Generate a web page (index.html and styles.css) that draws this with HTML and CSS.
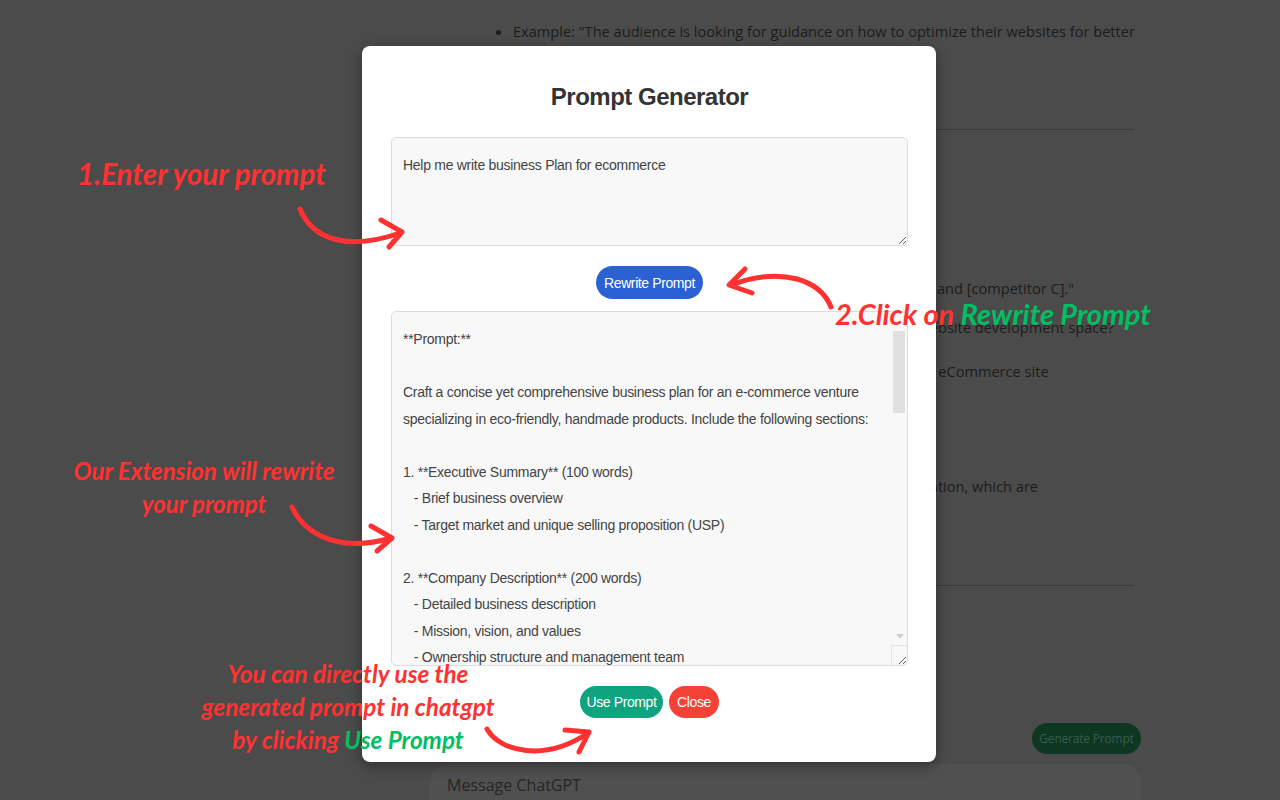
FILE: index.html
```html
<!DOCTYPE html>
<html>
<head>
<meta charset="utf-8">
<title>Prompt Generator</title>
<link rel="stylesheet" href="styles.css">
</head>
<body>
<div class="page">
  <main class="chat">
    <ul class="bul first">
      <li>Example: "The audience is looking for guidance on how to optimize their websites for better</li>
    </ul>
    <div class="ln indent">search engine rankings and conversions."</div>
    <hr class="rule r1">
    <ul class="bul lineA">
      <li>Example: "Competitors include [competitor A], [competitor B], and [competitor C]."</li>
    </ul>
    <div class="ln lineB">What sets your business apart from all your competitors in the website development space?</div>
    <ul class="bul lineC">
      <li>Example: "We create a speedy, reliable, and fully customizable eCommerce site</li>
    </ul>
    <div class="ln lineD">Describe the problems your audience faces in their everyday situation, which are</div>
    <hr class="rule r2">
  </main>
  <div class="composer">
    <div class="gen-row"><button class="gen-btn">Generate Prompt</button></div>
    <div class="msg-input">Message ChatGPT</div>
  </div>
</div>

<section class="modal">
  <h2 class="modal-title">Prompt Generator</h2>
  <textarea class="field field-in">Help me write business Plan for ecommerce</textarea>
  <div class="btn-row">
    <button class="pill pill-blue">Rewrite Prompt</button>
  </div>
  <div class="out-wrap">
    <textarea class="field field-out" readonly>**Prompt:**

Craft a concise yet comprehensive business plan for an e-commerce venture specializing in eco-friendly, handmade products. Include the following sections:

1. **Executive Summary** (100 words)
   - Brief business overview
   - Target market and unique selling proposition (USP)

2. **Company Description** (200 words)
   - Detailed business description
   - Mission, vision, and values
   - Ownership structure and management team

3. **Market Analysis** (300 words)
   - Industry overview and trends
   - Target market demographics and psychographics
   - Competitor analysis

4. **Products and Services** (200 words)
   - Product line and sourcing
   - Pricing strategy

5. **Marketing and Sales Strategy** (300 words)
   - Online marketing channels
   - Customer acquisition and retention

6. **Operations Plan** (200 words)
   - Fulfillment and logistics
   - Suppliers and artisans

7. **Financial Projections** (300 words)
   - Startup costs and funding needs
   - Revenue forecast for three years

Use clear headings and a professional tone.</textarea>
    <div class="sb-thumb"></div>
    <div class="sb-down"></div>
    <div class="sb-corner"></div>
  </div>
  <div class="btn-row bottom">
    <button class="pill pill-green">Use Prompt</button>
    <button class="pill pill-red">Close</button>
  </div>
</section>

<div class="note note1">1.Enter your prompt</div>
<div class="note note2">2.Click on <span class="g">Rewrite Prompt</span></div>
<div class="note note3">Our Extension will rewrite<br>your prompt</div>
<div class="note note4">You can directly use the<br>generated prompt in chatgpt<br>by clicking <span class="g">Use Prompt</span></div>

<svg class="arrows" width="1280" height="800" viewBox="0 0 1280 800">
  <g fill="none" stroke="#ff3131" stroke-width="5" stroke-linecap="round" stroke-linejoin="round">
    <path d="M300 209 C 312 238, 345 252, 400 233"/>
    <path d="M381 220 L402 232 L389 247"/>
    <path d="M831 307 C 820 280, 782 266, 731 285"/>
    <path d="M745 269 L729 285 L752 293"/>
    <path d="M292 507 C 305 535, 340 553, 391 538"/>
    <path d="M371 526 L392 538 L377 551"/>
    <path d="M487 729 C 500 752, 545 762, 588 733"/>
    <path d="M565 730 L589 732 L579 752"/>
  </g>
</svg>
</body>
</html>
```

FILE: styles.css
```css
* { box-sizing: border-box; }

html, body {
  margin: 0;
  padding: 0;
}

body {
  width: 1280px;
  height: 800px;
  overflow: hidden;
  background: #4b4b4b;
  position: relative;
  font-family: "Open Sans", "Noto Sans", sans-serif;
}

.page {
  display: flex;
  flex-direction: column;
  height: 800px;
}

.chat {
  flex: 0 0 723px;
  height: 723px;
  padding: 19px 0 0 490px;
  color: #1c1c1c;
  font-size: 14.6px;
  line-height: 24px;
  white-space: nowrap;
  overflow: hidden;
}

.bul {
  margin: 0;
  padding-left: 23px;
}

.ln { line-height: 24px; }
.indent { padding-left: 23px; }

.rule {
  border: 0;
  border-top: 1px solid #3a3a3a;
  width: 644px;
  margin: 0;
}
.r1 { margin-top: 62px; }
.lineA { margin-top: 146px; }
.lineB { margin-top: 15px; }
.lineC { margin-top: 20px; }
.lineD { margin-top: 91px; }
.r2 { margin-top: 87px; }

.composer {
  flex: 0 0 auto;
  margin-left: 430px;
  width: 711px;
  display: flex;
  flex-direction: column;
  gap: 10px;
}

.gen-row {
  display: flex;
  justify-content: flex-end;
}

.gen-btn {
  height: 31px;
  width: 109px;
  border: 0;
  border-radius: 16px;
  background: #0d3623;
  color: #3c5c4a;
  font-family: "Open Sans", sans-serif;
  font-size: 12px;
  letter-spacing: -0.2px;
  padding: 0;
}

.msg-input {
  height: 60px;
  border-radius: 18px;
  background: #505050;
  padding: 10px 17px;
  color: #262626;
  font-size: 16px;
  line-height: 22px;
}

/* Modal */
.modal {
  position: absolute;
  left: 362px;
  top: 46px;
  width: 574px;
  height: 716px;
  background: #fff;
  border-radius: 8px;
  padding: 37px 28px 0 29px;
  box-shadow: 0 4px 14px rgba(0, 0, 0, 0.35);
  display: flex;
  flex-direction: column;
  font-family: "Liberation Sans", Arial, sans-serif;
}

.modal-title {
  margin: 0 0 26px;
  text-align: center;
  font-size: 24px;
  line-height: 28px;
  font-weight: bold;
  letter-spacing: -0.5px;
  color: #333;
}

.field {
  display: block;
  width: 517px;
  margin: 0;
  border: 1px solid #dcdcdc;
  border-radius: 5px;
  background: #f8f8f8;
  color: #444;
  font-family: "Liberation Sans", Arial, sans-serif;
  font-size: 14px;
  letter-spacing: -0.28px;
  line-height: 26.5px;
  padding: 14px 11px 12px;
  outline: none;
}

.field-in { height: 109px; overflow: hidden; }

.out-wrap {
  position: relative;
  margin-top: 12px;
  width: 517px;
  height: 355px;
}

.field-out {
  height: 355px;
  padding: 14px 26px 12px 11px;
  overflow-y: hidden;
}

.sb-thumb {
  position: absolute;
  left: 502px;
  top: 20px;
  width: 12px;
  height: 82px;
  background: #e0e0e0;
}

.sb-down {
  position: absolute;
  left: 505px;
  top: 323px;
  width: 0;
  height: 0;
  border-left: 4px solid transparent;
  border-right: 4px solid transparent;
  border-top: 5px solid #d0d0d0;
}

.sb-corner {
  position: absolute;
  left: 500px;
  top: 334px;
  width: 16px;
  height: 20px;
  border-left: 1px solid #e2e2e2;
  border-top: 1px solid #e2e2e2;
}

.btn-row {
  display: flex;
  justify-content: center;
  gap: 6px;
  margin-top: 20px;
}

.pill {
  border: 0;
  border-radius: 17px;
  color: #fff;
  font-family: "Liberation Sans", Arial, sans-serif;
  font-size: 14px;
  letter-spacing: -0.4px;
  padding: 0;
}

.pill-blue {
  width: 107px;
  height: 33px;
  background: #2b62d3;
}

.pill-green {
  width: 83px;
  height: 32px;
  background: #10a37f;
}

.pill-red {
  width: 50px;
  height: 32px;
  background: #f44336;
}

/* Annotations */
.note {
  position: absolute;
  font-family: Lato, "Open Sans", sans-serif;
  font-weight: 700;
  font-style: italic;
  line-height: 33px;
  color: #ff3131;
  white-space: nowrap;
  z-index: 5;
}

.note .g { color: #00bf63; }

.note1 { left: 77px; top: 157px; font-size: 29.5px; }
.note2 { left: 835px; top: 297px; font-size: 28.9px; }
.note3 { left: 54px; top: 454px; width: 300px; text-align: center; font-size: 24px; }
.note4 { left: 178px; top: 657px; width: 340px; text-align: center; font-size: 24.3px; }

.arrows {
  position: absolute;
  left: 0;
  top: 0;
  z-index: 6;
  pointer-events: none;
}
```
